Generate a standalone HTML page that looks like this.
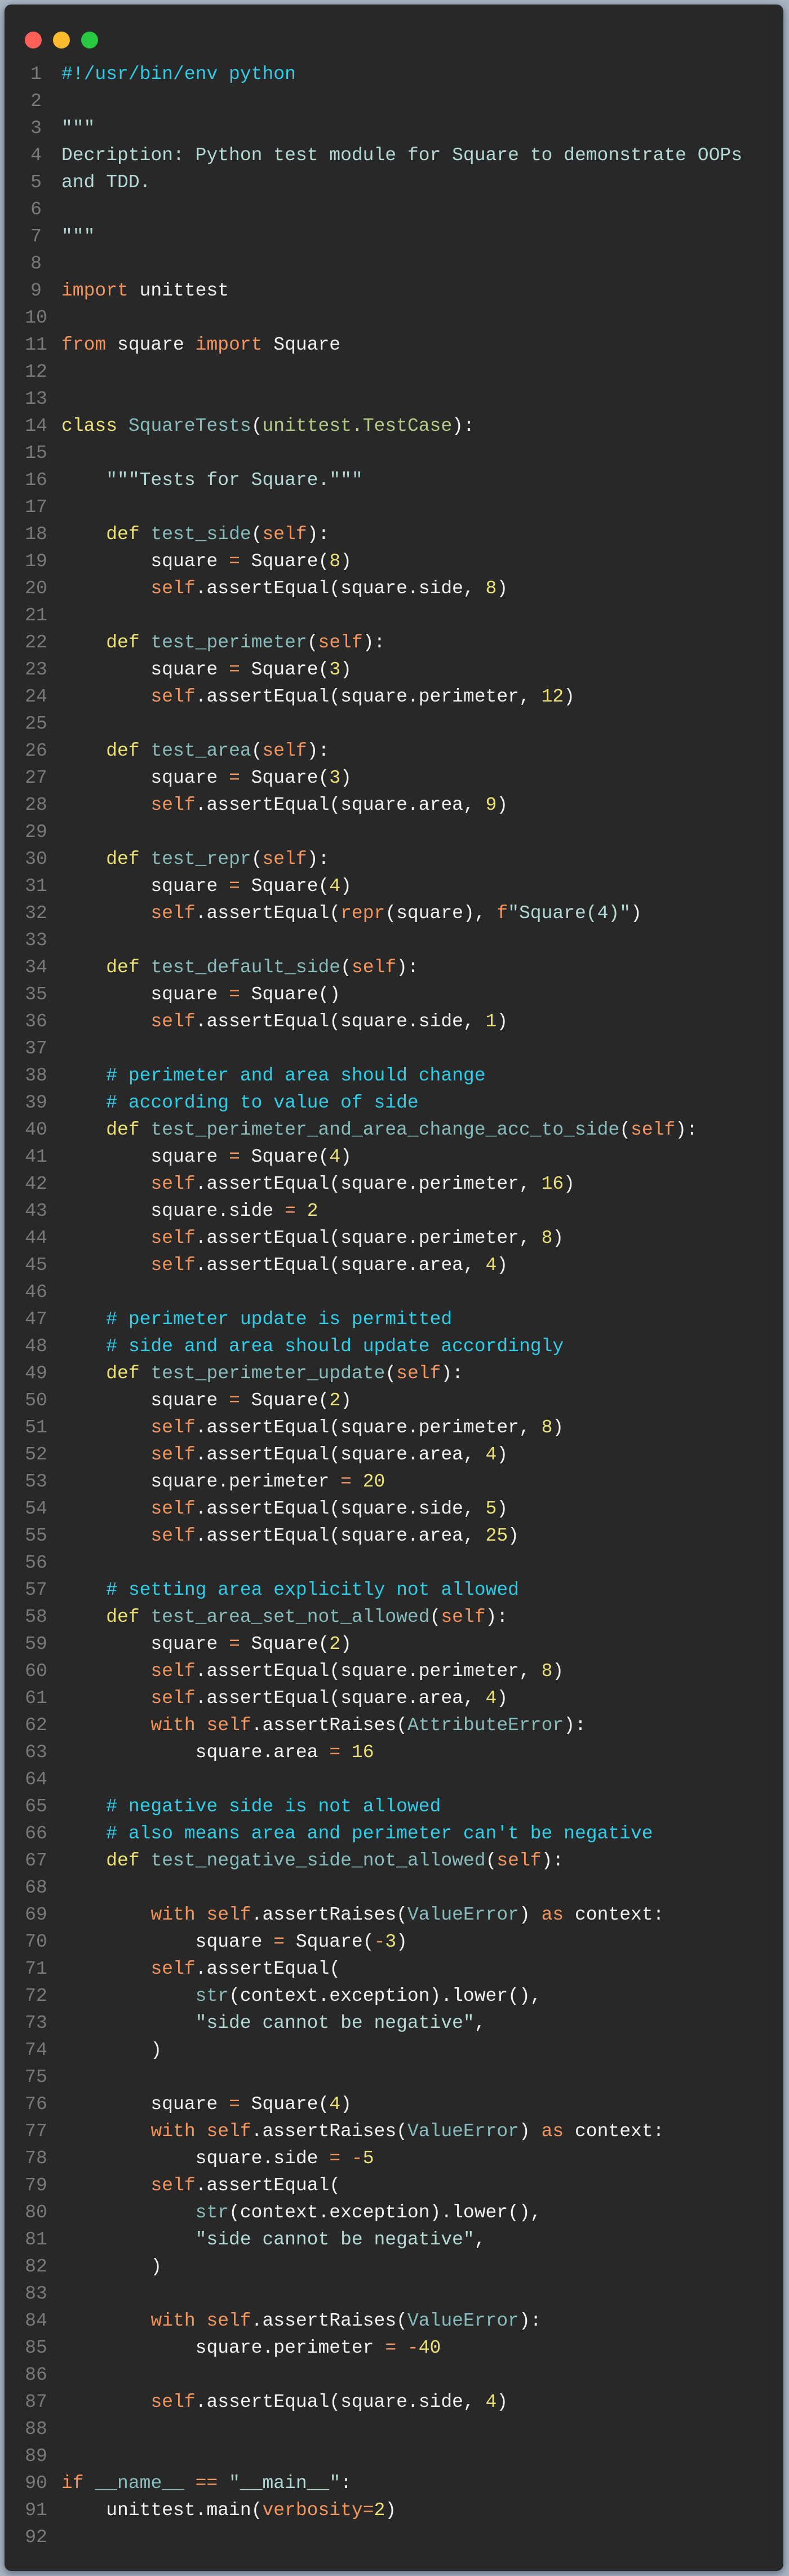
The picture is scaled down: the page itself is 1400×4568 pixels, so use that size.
<!DOCTYPE html>
<html><head><meta charset="utf-8"><style>
html,body{margin:0;padding:0}
body{width:1400px;height:4568px;background:#a9b5c3;position:relative;overflow:hidden}
.win{position:absolute;left:8px;top:8px;width:1382px;height:4551px;background:#282828;border-radius:12px;box-shadow:0 4px 14px rgba(40,50,70,.6)}
.dot{position:absolute;top:48px;width:30px;height:30px;border-radius:50%}
.ln{position:absolute;left:25px;width:62px;text-align:center;color:#7a7a7a}
.code{position:absolute;left:101px;color:#f2f2f2;white-space:normal}
.code div{white-space:pre}
.ln,.code{top:100px;font:33px/48px "Liberation Mono",monospace}
.ln div,.code div{height:48px}
.k{color:#f2955e}.y{color:#ede27a}.f{color:#88bcbc}.s{color:#b3d9d4}.c{color:#2fcde8}.g{color:#b7cb88}
</style></head><body>
<div class="win">
<div class="dot" style="left:36px;background:#fe5f57"></div>
<div class="dot" style="left:86px;background:#febc2e"></div>
<div class="dot" style="left:136px;background:#28c840"></div>
<div class="ln">
<div>1</div><div>2</div><div>3</div><div>4</div><div>5</div><div>6</div><div>7</div><div>8</div><div>9</div><div>10</div><div>11</div><div>12</div><div>13</div><div>14</div><div>15</div><div>16</div><div>17</div><div>18</div><div>19</div><div>20</div><div>21</div><div>22</div><div>23</div><div>24</div><div>25</div><div>26</div><div>27</div><div>28</div><div>29</div><div>30</div><div>31</div><div>32</div><div>33</div><div>34</div><div>35</div><div>36</div><div>37</div><div>38</div><div>39</div><div>40</div><div>41</div><div>42</div><div>43</div><div>44</div><div>45</div><div>46</div><div>47</div><div>48</div><div>49</div><div>50</div><div>51</div><div>52</div><div>53</div><div>54</div><div>55</div><div>56</div><div>57</div><div>58</div><div>59</div><div>60</div><div>61</div><div>62</div><div>63</div><div>64</div><div>65</div><div>66</div><div>67</div><div>68</div><div>69</div><div>70</div><div>71</div><div>72</div><div>73</div><div>74</div><div>75</div><div>76</div><div>77</div><div>78</div><div>79</div><div>80</div><div>81</div><div>82</div><div>83</div><div>84</div><div>85</div><div>86</div><div>87</div><div>88</div><div>89</div><div>90</div><div>91</div><div>92</div>
</div>
<div class="code">
<div><span class="c">#!/usr/bin/env python</span></div>
<div></div>
<div><span class="s">"""</span></div>
<div><span class="s">Decription: Python test module for Square to demonstrate OOPs</span></div>
<div><span class="s">and TDD.</span></div>
<div></div>
<div><span class="s">"""</span></div>
<div></div>
<div><span class="k">import</span> unittest</div>
<div></div>
<div><span class="k">from</span> square <span class="k">import</span> Square</div>
<div></div>
<div></div>
<div><span class="y">class</span> <span class="f">SquareTests</span>(<span class="g">unittest.TestCase</span>):</div>
<div></div>
<div>    <span class="s">"""Tests for Square."""</span></div>
<div></div>
<div>    <span class="y">def</span> <span class="f">test_side</span>(<span class="k">self</span>):</div>
<div>        square <span class="k">=</span> Square(<span class="y">8</span>)</div>
<div>        <span class="k">self</span>.assertEqual(square.side, <span class="y">8</span>)</div>
<div></div>
<div>    <span class="y">def</span> <span class="f">test_perimeter</span>(<span class="k">self</span>):</div>
<div>        square <span class="k">=</span> Square(<span class="y">3</span>)</div>
<div>        <span class="k">self</span>.assertEqual(square.perimeter, <span class="y">12</span>)</div>
<div></div>
<div>    <span class="y">def</span> <span class="f">test_area</span>(<span class="k">self</span>):</div>
<div>        square <span class="k">=</span> Square(<span class="y">3</span>)</div>
<div>        <span class="k">self</span>.assertEqual(square.area, <span class="y">9</span>)</div>
<div></div>
<div>    <span class="y">def</span> <span class="f">test_repr</span>(<span class="k">self</span>):</div>
<div>        square <span class="k">=</span> Square(<span class="y">4</span>)</div>
<div>        <span class="k">self</span>.assertEqual(<span class="k">repr</span>(square), <span class="k">f</span><span class="s">"Square(4)"</span>)</div>
<div></div>
<div>    <span class="y">def</span> <span class="f">test_default_side</span>(<span class="k">self</span>):</div>
<div>        square <span class="k">=</span> Square()</div>
<div>        <span class="k">self</span>.assertEqual(square.side, <span class="y">1</span>)</div>
<div></div>
<div>    <span class="c"># perimeter and area should change</span></div>
<div>    <span class="c"># according to value of side</span></div>
<div>    <span class="y">def</span> <span class="f">test_perimeter_and_area_change_acc_to_side</span>(<span class="k">self</span>):</div>
<div>        square <span class="k">=</span> Square(<span class="y">4</span>)</div>
<div>        <span class="k">self</span>.assertEqual(square.perimeter, <span class="y">16</span>)</div>
<div>        square.side <span class="k">=</span> <span class="y">2</span></div>
<div>        <span class="k">self</span>.assertEqual(square.perimeter, <span class="y">8</span>)</div>
<div>        <span class="k">self</span>.assertEqual(square.area, <span class="y">4</span>)</div>
<div></div>
<div>    <span class="c"># perimeter update is permitted</span></div>
<div>    <span class="c"># side and area should update accordingly</span></div>
<div>    <span class="y">def</span> <span class="f">test_perimeter_update</span>(<span class="k">self</span>):</div>
<div>        square <span class="k">=</span> Square(<span class="y">2</span>)</div>
<div>        <span class="k">self</span>.assertEqual(square.perimeter, <span class="y">8</span>)</div>
<div>        <span class="k">self</span>.assertEqual(square.area, <span class="y">4</span>)</div>
<div>        square.perimeter <span class="k">=</span> <span class="y">20</span></div>
<div>        <span class="k">self</span>.assertEqual(square.side, <span class="y">5</span>)</div>
<div>        <span class="k">self</span>.assertEqual(square.area, <span class="y">25</span>)</div>
<div></div>
<div>    <span class="c"># setting area explicitly not allowed</span></div>
<div>    <span class="y">def</span> <span class="f">test_area_set_not_allowed</span>(<span class="k">self</span>):</div>
<div>        square <span class="k">=</span> Square(<span class="y">2</span>)</div>
<div>        <span class="k">self</span>.assertEqual(square.perimeter, <span class="y">8</span>)</div>
<div>        <span class="k">self</span>.assertEqual(square.area, <span class="y">4</span>)</div>
<div>        <span class="k">with</span> <span class="k">self</span>.assertRaises(<span class="f">AttributeError</span>):</div>
<div>            square.area <span class="k">=</span> <span class="y">16</span></div>
<div></div>
<div>    <span class="c"># negative side is not allowed</span></div>
<div>    <span class="c"># also means area and perimeter can't be negative</span></div>
<div>    <span class="y">def</span> <span class="f">test_negative_side_not_allowed</span>(<span class="k">self</span>):</div>
<div></div>
<div>        <span class="k">with</span> <span class="k">self</span>.assertRaises(<span class="f">ValueError</span>) <span class="k">as</span> context:</div>
<div>            square <span class="k">=</span> Square(<span class="k">-</span><span class="y">3</span>)</div>
<div>        <span class="k">self</span>.assertEqual(</div>
<div>            <span class="f">str</span>(context.exception).lower(),</div>
<div>            <span class="s">"side cannot be negative"</span>,</div>
<div>        )</div>
<div></div>
<div>        square <span class="k">=</span> Square(<span class="y">4</span>)</div>
<div>        <span class="k">with</span> <span class="k">self</span>.assertRaises(<span class="f">ValueError</span>) <span class="k">as</span> context:</div>
<div>            square.side <span class="k">=</span> <span class="k">-</span><span class="y">5</span></div>
<div>        <span class="k">self</span>.assertEqual(</div>
<div>            <span class="f">str</span>(context.exception).lower(),</div>
<div>            <span class="s">"side cannot be negative"</span>,</div>
<div>        )</div>
<div></div>
<div>        <span class="k">with</span> <span class="k">self</span>.assertRaises(<span class="f">ValueError</span>):</div>
<div>            square.perimeter <span class="k">=</span> <span class="k">-</span><span class="y">40</span></div>
<div></div>
<div>        <span class="k">self</span>.assertEqual(square.side, <span class="y">4</span>)</div>
<div></div>
<div></div>
<div><span class="k">if</span> <span class="f">__name__</span> <span class="k">==</span> <span class="s">"__main__"</span>:</div>
<div>    unittest.main(<span class="k">verbosity</span><span class="k">=</span><span class="y">2</span>)</div>
<div></div>
</div>
</div>
</body></html>
